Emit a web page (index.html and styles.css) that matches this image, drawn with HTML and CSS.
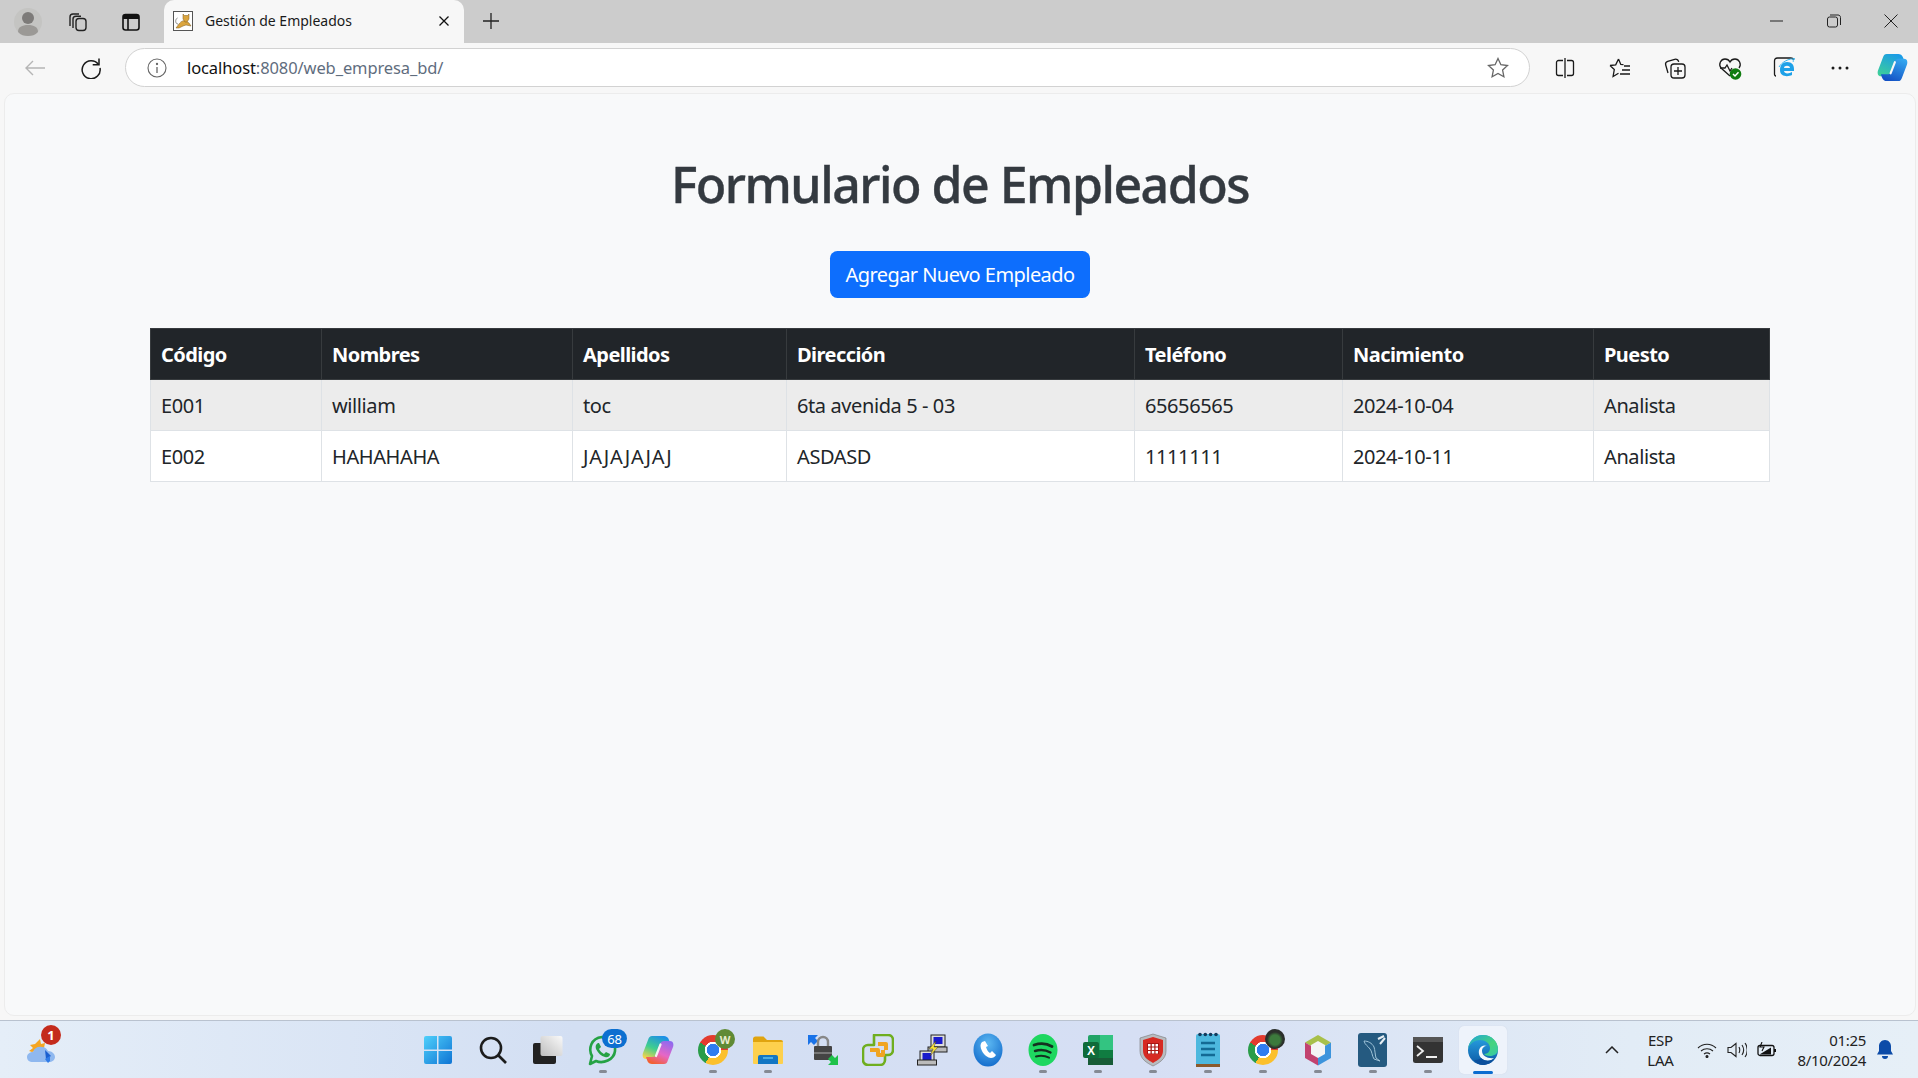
FILE: index.html
```html
<!DOCTYPE html>
<html lang="es">
<head>
<meta charset="utf-8">
<title>Gestión de Empleados</title>
<link rel="stylesheet" href="styles.css">
</head>
<body>
<div class="screen">
  <header class="tabstrip">
    <div class="strip-left">
      <span class="avatar"><svg viewBox="0 0 28 28" width="28" height="28"><circle cx="14" cy="14" r="14" fill="#c4c4c2"/><circle cx="14" cy="10" r="6" fill="#7d7b79"/><path d="M4 24c0-5 4-7 10-7s10 2 10 7c-3 3-6 4-10 4s-7-1-10-4z" fill="#9b9996"/></svg></span>
      <span class="strip-btn"><svg viewBox="0 0 22 22" width="22" height="22" fill="none" stroke="#222" stroke-width="1.4"><path d="M3 15V6c0-2 1-3 3-3h6"/><path d="M6 17V8c0-2 1-2.800 3-2.800h5"/><rect x="9" y="7.500" width="10" height="12" rx="3"/></svg></span>
      <span class="strip-btn"><svg viewBox="0 0 20 20" width="20" height="20" fill="none" stroke="#111" stroke-width="1.600"><rect x="2" y="2.500" width="16" height="15.500" rx="2.500"/><path d="M2 5h16" stroke-width="4"/><path d="M7 5v13"/></svg></span>
    </div>
    <div class="tab">
      <svg class="favicon" viewBox="0 0 20 20" width="20" height="20"><rect x=".5" y=".5" width="19" height="19" fill="#fff" stroke="#555"/><path d="M5 13C2 13 2 8 4.500 7" fill="none" stroke="#888" stroke-width="1"/><path d="M3 17l3-4c2-3 5-4 7-3l3 2 2 3-5-1-3 1-4 2z" fill="#dba53e" stroke="#7a5a20" stroke-width=".5"/><path d="M10 3l1.500 1.500h3L16 3v5l-2 3h-2l-2-3z" fill="#dba53e" stroke="#7a5a20" stroke-width=".5"/></svg>
      <span class="tab-title">Gestión de Empleados</span>
      <svg class="tab-close" viewBox="0 0 10 10" width="10" height="10" stroke="#111" stroke-width="1.300"><path d="M.5.5l9 9M9.500.5l-9 9"/></svg>
    </div>
    <span class="new-tab"><svg viewBox="0 0 18 18" width="18" height="18" stroke="#222" stroke-width="1.300"><path d="M9 1v16M1 9h16"/></svg></span>
    <div class="win-controls">
      <svg viewBox="0 0 14 14" width="14" height="14" stroke="#222" stroke-width="1"><path d="M0 7h13"/></svg>
      <svg viewBox="0 0 14 14" width="14" height="14" fill="none" stroke="#222" stroke-width="1"><rect x=".5" y="3" width="10" height="10" rx="2"/><path d="M3 1h8c1.500 0 2.500 1 2.500 2.500V11"/></svg>
      <svg viewBox="0 0 14 14" width="14" height="14" stroke="#222" stroke-width="1"><path d="M.5.5l13 13M13.500.5l-13 13"/></svg>
    </div>
  </header>

  <nav class="toolbar">
    <span class="nav-btn"><svg viewBox="0 0 22 18" width="22" height="18" fill="none" stroke="#b5b5b5" stroke-width="1.400"><path d="M21 9H2M9 2L2 9l7 7"/></svg></span>
    <span class="nav-btn"><svg viewBox="0 0 22 22" width="22" height="22" fill="none" stroke="#1a1a1a" stroke-width="1.500"><path d="M18.500 7.500A9 9 0 1 0 20 11"/><path d="M19 1.500v6.300h-6.300"/></svg></span>
    <div class="urlbar">
      <svg class="info" viewBox="0 0 20 20" width="20" height="20" fill="none" stroke="#666" stroke-width="1.100"><circle cx="10" cy="10" r="9"/><path d="M10 9v6" stroke-width="1.300"/><circle cx="10" cy="6" r=".6" fill="#666"/></svg>
      <span class="url"><span class="url-host">localhost</span>:8080/web_empresa_bd/</span>
      <svg class="url-star" viewBox="0 0 22 22" width="22" height="22" fill="none" stroke="#666" stroke-width="1.300"><path d="M11 1.500l2.900 6.200 6.600.8-4.900 4.600 1.300 6.700-5.900-3.300-5.900 3.300 1.300-6.700L1.500 8.500l6.600-.8z"/></svg>
    </div>
    <div class="tools">
      <span class="tool"><svg viewBox="0 0 20 20" width="20" height="20" fill="none" stroke="#1a1a1a" stroke-width="1.300"><path d="M8 2.500H3.500a2 2 0 0 0-2 2v11a2 2 0 0 0 2 2H8M12 2.500h4.500a2 2 0 0 1 2 2v11a2 2 0 0 1-2 2H12M10 0v20"/></svg></span>
      <span class="tool"><svg viewBox="0 0 22 22" width="22" height="22" fill="none" stroke="#1a1a1a" stroke-width="1.300"><path d="M9.500 2l2.300 5.500 2.700.2M1 8.500l5.700-.7L9.500 2M1 8.500l4.300 4-1.200 7 5.400-3.300M15 9h6M13 13h8M11 17h10"/></svg></span>
      <span class="tool"><svg viewBox="0 0 22 22" width="22" height="22" fill="none" stroke="#1a1a1a" stroke-width="1.300"><path d="M4 16l-2.300-8a3 3 0 0 1 2-3.700l7-2c2-.5 3.500.5 4 2.500"/><rect x="7" y="7" width="14" height="14" rx="3"/><path d="M14 10v8M10 14h8"/></svg></span>
      <span class="tool"><svg viewBox="0 0 24 24" width="24" height="24"><path d="M12 20L3 12C0 8 3 3 7 3c2 0 4 1 5 3 1-2 3-3 5-3 4 0 7 5 4 9" fill="none" stroke="#1a1a1a" stroke-width="1.300"/><path d="M2 12h5l2-3 3 6 2-3" fill="none" stroke="#1a1a1a" stroke-width="1.300"/><circle cx="17.500" cy="18" r="5.800" fill="#107c10"/><path d="M15 18l2 2 3.500-3.800" fill="none" stroke="#fff" stroke-width="1.500"/></svg></span>
      <span class="tool"><svg viewBox="0 0 24 24" width="24" height="24"><path d="M3 20c-1 0-1.500-1-1.500-2V5c0-2 1-3 3-3h13c2 0 3 1 3 2" fill="none" stroke="#1a1a1a" stroke-width="1.300"/><path d="M7 14c0-5 3-8 7-8 5 0 7 3 7 7v2H11c.3 3 5 3 8 1v3c-4 2-12 2-12-5zm4-2h6c0-3-6-3-6 0z" fill="#1ea1e8"/><path d="M6 11c3-5 10-9 16-8-3-1-1 2-2 3" fill="none" stroke="#39b7f0" stroke-width="1"/></svg></span>
      <span class="tool"><svg viewBox="0 0 20 6" width="20" height="6" fill="#1a1a1a"><circle cx="3" cy="3" r="1.500"/><circle cx="10" cy="3" r="1.500"/><circle cx="17" cy="3" r="1.500"/></svg></span>
      <span class="tool tool-copilot"><svg viewBox="0 0 32 30" width="31" height="29"><defs><linearGradient id="cpa" x1=".7" y1="0" x2=".2" y2="1"><stop offset="0" stop-color="#1a9be8"/><stop offset="1" stop-color="#3dcf9a"/></linearGradient><linearGradient id="cpb" x1=".8" y1="0" x2=".3" y2="1"><stop offset="0" stop-color="#35a8f0"/><stop offset="1" stop-color="#1350c4"/></linearGradient></defs><path d="M10 1h12c2 0 4 1 5 4l1 3h-6c-3 0-4 1-5 4l-3 9c-1 2-2 3-4 3H4C1 24 0 21 1 18L6 5C7 2 8 1 10 1z" fill="url(#cpa)"/><path d="M22 29H10c-2 0-4-1-5-4l-1-3h6c3 0 4-1 5-4l3-9c1-2 2-3 4-3h6c3 0 4 3 3 6l-5 13c-1 3-2 4-4 4z" fill="url(#cpb)"/><path d="M18.500 9.500L14 21" stroke="#f7f7f7" stroke-width="2.200" stroke-linecap="round"/></svg></span>
    </div>
  </nav>

  <div class="viewport">
    <main class="page">
      <h1 class="page-title">Formulario de Empleados</h1>
      <a class="btn-primary">Agregar Nuevo Empleado</a>
      <table class="data-table">
        <colgroup>
          <col class="c-codigo"><col class="c-nombres"><col class="c-apellidos"><col class="c-direccion"><col class="c-telefono"><col class="c-nacimiento"><col class="c-puesto">
        </colgroup>
        <thead>
          <tr><th>Código</th><th>Nombres</th><th>Apellidos</th><th>Dirección</th><th>Teléfono</th><th>Nacimiento</th><th>Puesto</th></tr>
        </thead>
        <tbody>
          <tr class="striped"><td>E001</td><td>william</td><td>toc</td><td>6ta avenida 5 - 03</td><td>65656565</td><td>2024-10-04</td><td>Analista</td></tr>
          <tr><td>E002</td><td>HAHAHAHA</td><td class="cell-wide">JAJAJAJAJ</td><td>ASDASD</td><td>1111111</td><td>2024-10-11</td><td>Analista</td></tr>
        </tbody>
      </table>
    </main>
  </div>

  <footer class="taskbar">
    <div class="task-left">
      <span class="weather">
        <svg viewBox="0 0 34 30" width="34" height="30"><path d="M14 3l1 5 4-1-1 5-12 4-3-1 4-3-3-3 5-1z" fill="#f5a623"/><path d="M7 26c-4 0-6-2-6-5s3-5 6-5c1-4 5-6 9-5 3 0 5 2 6 4 4 0 7 3 7 6s-3 5-6 5z" fill="#8fb8ef"/><path d="M19 14l6 6-5 3z" fill="#1a5fd0"/><path d="M19 23l5-3 0 5-2 2z" fill="#2e7be8"/></svg>
        <span class="weather-badge">1</span>
      </span>
    </div>
    <div class="apps">
      <span class="app"><svg viewBox="0 0 30 30" width="30" height="30"><defs><linearGradient id="win" x1="0" y1="0" x2="1" y2="1"><stop offset="0" stop-color="#4fd0fb"/><stop offset="1" stop-color="#0f74d4"/></linearGradient></defs><path d="M1 3a2 2 0 0 1 2-2h11v13.500H1zM15.500 1H27a2 2 0 0 1 2 2v11.500H15.500zM1 16h13v13H3a2 2 0 0 1-2-2zM15.500 16H29v11a2 2 0 0 1-2 2H15.500z" fill="url(#win)"/></svg></span>
      <span class="app"><svg viewBox="0 0 28 28" width="28" height="28" fill="none" stroke="#1c1c1c" stroke-width="2.600"><circle cx="12" cy="12" r="10"/><path d="M19 19l8 8"/></svg></span>
      <span class="app"><svg viewBox="0 0 30 30" width="30" height="30"><rect x="0" y="8" width="23" height="21" rx="2" fill="#222"/><defs><linearGradient id="tv" x1="0" y1="1" x2="1" y2="0"><stop offset="0" stop-color="#bdbdbd"/><stop offset="1" stop-color="#fafafa"/></linearGradient></defs><rect x="7.500" y="1" width="22" height="20" rx="2" fill="url(#tv)"/></svg></span>
      <span class="app running"><svg viewBox="0 0 32 32" width="32" height="32" fill="none"><path d="M3 30l2-8C1 15 4 4 15 3c9 0 14 7 13 14-1 9-12 13-19 10z" stroke="#25a244" stroke-width="2.600" stroke-linejoin="round"/><path d="M11 9c-2 1-3 3-2 6 2 4 5 7 9 8 3 1 5-1 5-3l-4-2-2 2c-2-1-4-3-5-5l2-2-2-4z" fill="#25a244"/></svg><span class="app-badge">68</span></span>
      <span class="app"><svg viewBox="0 0 32 30" width="32" height="30"><defs><linearGradient id="cp1" x1=".7" y1="0" x2=".2" y2="1"><stop offset="0" stop-color="#1d8fe8"/><stop offset=".55" stop-color="#3fcf8e"/><stop offset="1" stop-color="#f6d34c"/></linearGradient><linearGradient id="cp2" x1=".8" y1="0" x2=".3" y2="1"><stop offset="0" stop-color="#8e6af0"/><stop offset=".55" stop-color="#e667c6"/><stop offset="1" stop-color="#f2602f"/></linearGradient></defs><path d="M10 1h12c2 0 4 1 5 4l1 3h-6c-3 0-4 1-5 4l-3 9c-1 2-2 3-4 3H4C1 24 0 21 1 18L6 5C7 2 8 1 10 1z" fill="url(#cp1)"/><path d="M22 29H10c-2 0-4-1-5-4l-1-3h6c3 0 4-1 5-4l3-9c1-2 2-3 4-3h6c3 0 4 3 3 6l-5 13c-1 3-2 4-4 4z" fill="url(#cp2)"/><path d="M18.500 9.500L14 21" stroke="#f4f1f4" stroke-width="2.200" stroke-linecap="round"/></svg></span>
      <span class="app running"><span class="chrome"></span><span class="app-avatar avatar-w">W</span></span>
      <span class="app running"><svg viewBox="0 0 32 30" width="32" height="30"><path d="M1 4c0-1.500 1-2.500 2.500-2.500h8L15 5h14a2 2 0 0 1 2 2v4H1z" fill="#e0a40f"/><path d="M1 7h30v21a1 1 0 0 1-1 1H2a1 1 0 0 1-1-1z" fill="#fdd04d"/><path d="M6 29v-7a2 2 0 0 1 2-2h16a2 2 0 0 1 2 2v7z" fill="#1276c4"/><path d="M11 23h10" stroke="#5cc0f0" stroke-width="1.500"/></svg></span>
      <span class="app"><svg viewBox="0 0 32 32" width="32" height="32"><path d="M1 1h10l-3 3 3 3-4 4-3-3-3 3z" fill="#1a73e8"/><rect x="7" y="12" width="18" height="14" rx="1" fill="#444"/><path d="M7 19h18" stroke="#777" stroke-width="2"/><path d="M11 12V8a5 5 0 0 1 10 0v4" fill="none" stroke="#888" stroke-width="2.400"/><path d="M31 31H21l3-3-3-3 4-4 3 3 3-3z" fill="#1fc24a"/></svg></span>
      <span class="app"><svg viewBox="0 0 32 32" width="32" height="32" fill="none" stroke-linejoin="round"><path d="M12 1h14a5 5 0 0 1 5 5v10a5 5 0 0 1-5 5h-3v5a5 5 0 0 1-5 5H6a5 5 0 0 1-5-5V16a5 5 0 0 1 5-5h6z" fill="none" stroke="#6fae1f" stroke-width="2.600"/><path d="M8 16h8v5h5v-5M16 10h8v6" stroke="#f0a422" stroke-width="4"/></svg></span>
      <span class="app"><svg viewBox="0 0 32 32" width="32" height="32"><rect x="14" y="1" width="14" height="12" fill="#ddd" stroke="#222"/><rect x="16.500" y="3" width="9" height="7" fill="#1a1acc"/><rect x="11" y="13" width="19" height="5" fill="#bbb" stroke="#222"/><rect x="3" y="17" width="14" height="11" fill="#ddd" stroke="#222"/><rect x="5.500" y="19" width="9" height="7" fill="#1a1acc"/><rect x="0.500" y="26" width="19" height="5" fill="#bbb" stroke="#222"/><path d="M19 7l-7 8 4 0-3 7 8-9-4 0z" fill="#f7e13a" stroke="#222" stroke-width=".4"/></svg></span>
      <span class="app"><svg viewBox="0 0 30 34" width="30" height="34"><defs><radialGradient id="ph" cx=".5" cy=".3" r=".8"><stop offset="0" stop-color="#5cb8f2"/><stop offset="1" stop-color="#0c64c8"/></radialGradient></defs><ellipse cx="15" cy="17" rx="14.500" ry="16.500" fill="url(#ph)"/><path d="M9 9c-2 2-2 5 0 9 2 4 6 7 9 7 2 0 4-1 5-3l-4-4-2 2c-2-1-3-3-4-6l2-1-3-5z" fill="#fff"/></svg></span>
      <span class="app running"><svg viewBox="0 0 30 32" width="30" height="32" fill="none"><ellipse cx="15" cy="16" rx="14.500" ry="16" fill="#1ed760"/><g stroke="#14301f" stroke-linecap="round"><path d="M6 11c6-2 13-1.500 18 1.500" stroke-width="2.800"/><path d="M7 17c5-1.500 11-1 15.500 1.500" stroke-width="2.400"/><path d="M8 22.500c4-1 9-.8 13 1.200" stroke-width="2"/></g></svg></span>
      <span class="app running"><svg viewBox="0 0 30 32" width="30" height="32"><rect x="5" y="1" width="25" height="30" rx="2" fill="#21a366"/><rect x="17" y="1" width="13" height="15" fill="#33c481"/><rect x="5" y="16" width="25" height="8" fill="#107c41"/><rect x="5" y="24" width="25" height="7" fill="#185c37"/><rect x="0" y="8" width="16" height="16" rx="2" fill="#0f6b3a"/><text x="8" y="21" class="excel-x">X</text></svg></span>
      <span class="app running"><svg viewBox="0 0 28 34" width="28" height="34"><path d="M14 1l13 4v13c0 8-7 12-13 15C8 30 1 26 1 18V5z" fill="#b8bcc0" stroke="#777" stroke-width=".6"/><path d="M14 4l10 3v11c0 6-5 9-10 12-5-3-10-6-10-12V7z" fill="#d62a22"/><path d="M8 10h12v11H8z" fill="#a81712"/><path d="M9 11h2.500v2.500H9zM12.800 11h2.500v2.500h-2.500zM16.500 11H19v2.500h-2.500zM9 14.500h2.500V17H9zM12.800 14.500h2.500V17h-2.500zM16.500 14.500H19V17h-2.500zM9 18h2.500v2.500H9zM12.800 18h2.500v2.500h-2.500zM16.500 18H19v2.500h-2.500z" fill="#fff"/></svg></span>
      <span class="app running"><svg viewBox="0 0 24 36" width="24" height="36"><rect x="0" y="2" width="24" height="32" rx="2" fill="#4db8de"/><rect x="0" y="32" width="24" height="3" fill="#8a5a2c"/><g fill="#123a5c"><circle cx="4" cy="2.500" r="1.800"/><circle cx="9.300" cy="2.500" r="1.800"/><circle cx="14.600" cy="2.500" r="1.800"/><circle cx="20" cy="2.500" r="1.800"/></g><path d="M5 11h14M5 17h14M5 23h14" stroke="#136a94" stroke-width="2.400"/></svg></span>
      <span class="app running"><span class="chrome"></span><span class="app-avatar avatar-photo"></span></span>
      <span class="app running"><svg viewBox="0 0 28 32" width="28" height="32" fill="none"><path d="M14 1l13 7.500-13 7.500L1 8.500z" fill="#a8c04a"/><path d="M1 8.500V24l13 7.500V16z" fill="#c2426f"/><path d="M27 8.500V24l-13 7.500V16z" fill="#3d94dc"/><path d="M14 7l7 4v9l-7 4-7-4v-9z" fill="#f4f4f4"/></svg></span>
      <span class="app running"><svg viewBox="0 0 30 34" width="30" height="34"><rect x="0" y="0" width="29" height="34" rx="3" fill="#255a80"/><path d="M6 8c4 0 8 2 10 6 1 3 1 7 2 11l4 3-6-2c-2-3-2-8-4-10-2-3-5-4-6-8z" fill="none" stroke="#9fc3d8" stroke-width="1"/><path d="M20 6l6-3M22 11l5-6" stroke="#e6eef3" stroke-width="2"/></svg></span>
      <span class="app running"><svg viewBox="0 0 30 26" width="30" height="26"><rect x="0" y="0" width="30" height="26" rx="2.500" fill="#333"/><rect x="0" y="0" width="30" height="5" fill="#555"/><path d="M4 9l6 5-6 5" fill="none" stroke="#eee" stroke-width="1.800"/><path d="M13 20h11" stroke="#eee" stroke-width="2"/></svg></span>
      <span class="app active"><svg viewBox="0 0 32 32" width="32" height="32"><defs><linearGradient id="ed1" x1="0" y1="0" x2="1" y2="1"><stop offset="0" stop-color="#1fa4d8"/><stop offset=".6" stop-color="#45d47e"/><stop offset="1" stop-color="#35c9a8"/></linearGradient><linearGradient id="ed2" x1="0" y1="0" x2="0" y2="1"><stop offset="0" stop-color="#2aa6e6"/><stop offset="1" stop-color="#0c59a4"/></linearGradient></defs><circle cx="16" cy="16" r="15" fill="url(#ed2)"/><path d="M16 1c9 0 15 7 15 14 0 5-4 7-8 7-3 0-5-1-6-2 4 0 6-3 6-6 0-5-5-8-10-8S3 9 1 15C2 7 8 1 16 1z" fill="url(#ed1)"/><path d="M12 20c-1-6 3-10 8-8-3 0-5 2-5 5 0 5 6 8 12 7-3 4-13 4-15-4z" fill="#f4f9fd"/><path d="M14 24c3 3 9 4 14 0-3 5-8 7-12 7-4 0-7-2-9-5 2 0 5 0 7-2z" fill="#0b4f9c"/></svg></span>
    </div>
    <div class="tray">
      <svg class="tray-chevron" viewBox="0 0 14 8" width="14" height="8" fill="none" stroke="#222" stroke-width="1.500"><path d="M1 7l6-6 6 6"/></svg>
      <div class="lang"><span>ESP</span><span>LAA</span></div>
      <div class="tray-icons">
        <svg viewBox="0 0 20 16" width="20" height="16" fill="none" stroke="#222" stroke-width="1.100"><path d="M1 6c5-5 13-5 18 0M4 9c3.500-3 8.500-3 12 0M7 12c2-1.500 4-1.500 6 0"/><circle cx="10" cy="14.500" r="1" fill="#222"/></svg>
        <svg viewBox="0 0 20 16" width="20" height="16" fill="none" stroke="#222" stroke-width="1.100"><path d="M1 5.500h3L9 1.500v13l-5-4H1zM12 5c1 2 1 4 0 6M15 3c2 3 2 7 0 10M18 1c3 4 3 10 0 14"/></svg>
        <svg viewBox="0 0 21 16" width="21" height="16" fill="none" stroke="#111" stroke-width="1.300"><rect x="1" y="3.500" width="16" height="10" rx="2"/><path d="M18 7v3" stroke-width="2"/><path d="M2.500 12.500L14 5.500V12.500z" fill="#111" stroke="none"/><path d="M5 0L3 5h4L5 9" stroke-width="1.100"/></svg>
      </div>
      <div class="clock"><span>01:25</span><span>8/10/2024</span></div>
      <svg class="bell" viewBox="0 0 16 20" width="16" height="20" fill="#0c4ba8"><path d="M8 0c3.500 0 6 3 6 6v5l2 3.500H0L2 11V6c0-3 2.500-6 6-6z"/><path d="M5 16h6c0 2-1 3-3 3s-3-1-3-3z"/></svg>
    </div>
  </footer>
</div>
</body>
</html>
```

FILE: styles.css
```css
* { box-sizing: border-box; }
html, body { margin: 0; padding: 0; }
body { width: 1918px; height: 1078px; overflow: hidden; background: #f7f7f7; font-family: "Noto Sans", "Open Sans", sans-serif; }
.screen { display: flex; flex-direction: column; height: 1078px; }

/* Tab strip */
.tabstrip { height: 43px; flex: none; background: #cccccc; display: flex; align-items: stretch; }
.strip-left { width: 164px; display: flex; align-items: center; padding-left: 14px; }
.avatar { display: flex; width: 28px; height: 28px; }
.strip-btn { display: flex; }
.strip-btn:nth-child(2) { margin-left: 25px; }
.strip-btn:nth-child(3) { margin-left: 32px; }
.tab { width: 300px; background: #f7f7f7; border-radius: 10px 10px 0 0; display: flex; align-items: center; padding: 0 15px 2px 9px; }
.favicon { flex: none; }
.tab-title { margin-left: 12px; font-size: 14px; color: #1a1a1a; flex: 1; white-space: nowrap; }
.tab-close { flex: none; }
.new-tab { display: flex; align-items: center; margin-left: 18px; padding-bottom: 2px; }
.win-controls { margin-left: auto; display: flex; align-items: center; gap: 43px; padding: 0 20px 1px 0; }

/* Toolbar */
.toolbar { height: 50px; flex: none; background: #f7f7f7; display: flex; align-items: center; padding: 0 0 1px 24px; }
.nav-btn { display: flex; width: 56px; flex: none; }
.urlbar { width: 1405px; flex: none; height: 39px; margin-left: -11px; background: #fff; border: 1.500px solid #d2d2d2; border-radius: 20px; display: flex; align-items: center; padding: 0 20px 0 21px; }
.info { flex: none; }
.url { margin-left: 20px; font-size: 16.500px; color: #5f6d7e; flex: 1; letter-spacing: -0.1px; white-space: nowrap; }
.url-host { color: #111; }
.url-star { flex: none; }
.tools { display: flex; align-items: center; flex: none; margin-left: 7px; }
.tool { display: flex; width: 55px; justify-content: center; }
.tool-copilot { width: 50px; }

/* Page */
.viewport { height: 927px; flex: none; padding: 0 2px 4px 4px; }
.page { height: 100%; background: #f8f9fa; border: 1px solid #ececec; border-radius: 10px; display: flex; flex-direction: column; align-items: center; }
.page-title { margin: 60px 0 37px; font-size: 50px; line-height: 60px; font-weight: 500; color: #343a40; letter-spacing: -1.500px; -webkit-text-stroke: 0.4px #343a40; white-space: nowrap; }
.btn-primary { width: 260px; height: 47px; background: #0d6efd; color: #fff; border-radius: 7.500px; font-size: 20px; letter-spacing: -0.550px; display: flex; align-items: center; justify-content: center; white-space: nowrap; }
.data-table { width: 1619px; margin-top: 30px; border-collapse: collapse; table-layout: fixed; font-size: 20px; color: #212529; }
.c-codigo { width: 171px; }
.c-nombres { width: 251px; }
.c-apellidos { width: 214px; }
.c-direccion { width: 348px; }
.c-telefono { width: 208px; }
.c-nacimiento { width: 251px; }
.c-puesto { width: 176px; }
.data-table th, .data-table td { height: 51px; padding: 1px 10px 0 10px; border: 1px solid #dee2e6; text-align: left; vertical-align: middle; white-space: nowrap; line-height: 30px; }
.data-table th { background: #212529; color: #fff; border-color: #373b3e; font-weight: 700; letter-spacing: -0.550px; }
.data-table td { background: #fff; letter-spacing: -0.400px; }
.data-table td.cell-wide { letter-spacing: 0.800px; }
.striped td { background: #ececec; }

/* Taskbar */
.taskbar { height: 58px; flex: none; border-top: 1px solid #b9c2cf; background: linear-gradient(90deg, #e5eef8 0%, #d3dff3 30%, #d6dff4 60%, #e2ecf6 85%, #e6eff7 100%); display: grid; grid-template-columns: 1fr auto 1fr; align-items: center; padding-left: 2px; }
.task-left { padding-left: 24px; display: flex; }
.weather { position: relative; display: flex; width: 34px; height: 30px; margin-top: 3px; }
.weather-badge { position: absolute; left: 15px; top: -11px; width: 20px; height: 20px; border-radius: 50%; background: #c42b1c; color: #fff; font-size: 13px; font-weight: 700; display: flex; align-items: center; justify-content: center; }
.apps { display: flex; height: 100%; }
.app { width: 55px; height: 100%; display: flex; align-items: center; justify-content: center; position: relative; }
.app.running::after { content: ""; position: absolute; left: 23.500px; bottom: 5px; width: 8px; height: 3px; border-radius: 2px; background: #858a94; }
.app.active { background: #eef3fb; border-radius: 5px; height: 48px; margin-top: 5px; width: 48px; margin-left: 4px; margin-right: 3px; box-shadow: 0 0 1px #c6cede; }
.app.active::after { content: ""; position: absolute; left: 14px; bottom: 0; width: 20px; height: 3.500px; border-radius: 2px; background: #0a6cd0; }
.app-badge { position: absolute; left: 27px; top: 8px; width: 25px; height: 19px; border-radius: 10px; background: #0c6fd0; color: #fff; font-size: 13px; display: flex; align-items: center; justify-content: center; letter-spacing: -0.300px; }
.chrome { display: block; width: 30px; height: 30px; border-radius: 50%; background: radial-gradient(circle at 50% 50%, #2f7cf0 0 6px, #fff 6.500px 8px, transparent 8.500px), conic-gradient(from 300deg, #e33b2e 0 150deg, #fbc02d 150deg 270deg, #2a9d49 270deg 360deg); }
.app-avatar { position: absolute; left: 30px; top: 8px; width: 20px; height: 20px; border-radius: 50%; }
.avatar-w { background: #5f8a35; color: #e8eccf; font-size: 11px; font-weight: 700; display: flex; align-items: center; justify-content: center; }
.avatar-photo { background: radial-gradient(circle at 50% 55%, #3c7a3c 0 5px, #2b2f2b 8px); }
.excel-x { font-family: "Liberation Sans", sans-serif; font-size: 12px; font-weight: 700; fill: #fff; text-anchor: middle; }

.tray { display: flex; align-items: center; justify-content: flex-end; font-size: 15px; color: #222; }
.tray-chevron { margin-right: 27px; }
.lang { display: flex; flex-direction: column; align-items: center; line-height: 20px; width: 28px; margin-right: 23px; letter-spacing: -0.200px; }
.tray-icons { display: flex; gap: 10px; align-items: center; }
.clock { display: flex; flex-direction: column; align-items: flex-end; line-height: 20px; margin-left: 19px; letter-spacing: -0.300px; }
.bell { margin: 0 25px 0 11px; }
```
